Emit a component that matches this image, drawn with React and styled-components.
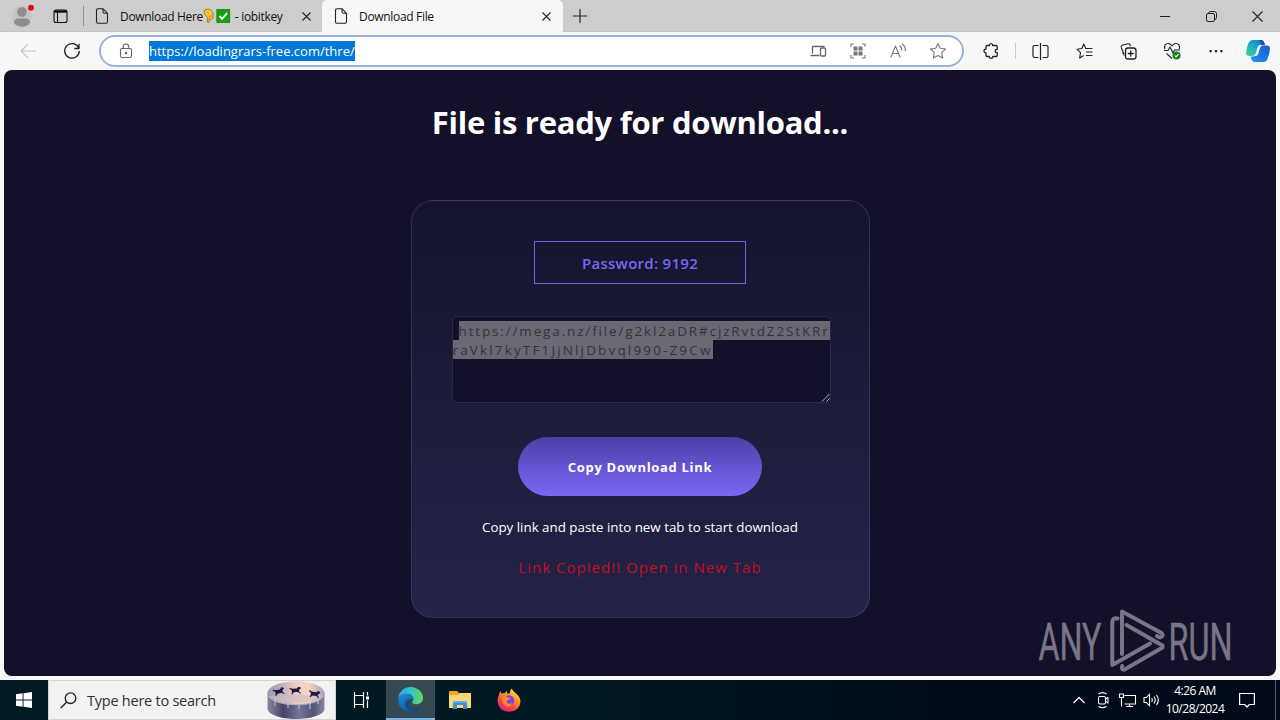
import React from "react";
import styled, { createGlobalStyle, css } from "styled-components";

const GlobalStyle = createGlobalStyle`
  * {
    box-sizing: border-box;
  }
  body {
    margin: 0;
    overflow: hidden;
    font-family: "Open Sans", "Noto Sans", sans-serif;
  }
  svg {
    display: block;
    flex: none;
    overflow: visible;
  }
`;

const Desktop = styled.div`
  width: 1280px;
  height: 720px;
  display: flex;
  flex-direction: column;
  background: #f7f7f7;
`;

/* ---------- tab strip ---------- */

const TabStrip = styled.div`
  flex: none;
  height: 32px;
  display: flex;
  background: #cdcdcd;
  border-bottom: 1px solid #c3c3c3;
`;

const StripButton = styled.div`
  width: ${props => props.$width}px;
  height: 32px;
  display: flex;
  align-items: center;
  justify-content: center;
`;

const StripDivider = styled.div`
  width: 1px;
  height: 20px;
  margin: 6px 0 0 7px;
  background: #8d8d8d;
`;

const Tab = styled.div`
  width: ${props => props.$width}px;
  height: 32px;
  display: flex;
  align-items: center;
  padding: 0 11px;
  font-size: 12px;
  letter-spacing: -0.32px;
  color: #111;
  white-space: pre;
  ${props =>
    props.$active &&
    css`
      padding: 0 12px;
      background: #f7f7f7;
      border-radius: 5px 5px 0 0;
    `};
`;

const TabTitle = styled.div`
  flex: 1;
  display: flex;
  align-items: center;
  margin-left: 11px;
`;

const WindowButtons = styled.div`
  display: flex;
  margin-left: auto;
`;

/* ---------- toolbar ---------- */

const Toolbar = styled.div`
  flex: none;
  height: 38px;
  display: flex;
  align-items: center;
  background: #f7f7f7;
`;

const ToolButton = styled.div`
  width: ${props => props.$width || 44}px;
  height: 38px;
  display: flex;
  align-items: center;
  justify-content: center;
  flex: none;
`;

const NavButtons = styled.div`
  flex: none;
  width: 99px;
  display: flex;
  padding-left: 6px;
`;

const AddressBar = styled.div`
  flex: none;
  width: 865px;
  height: 32px;
  display: flex;
  align-items: center;
  padding: 0 4px 0 17px;
  background: #fff;
  border: 2px solid #9ab3de;
  border-radius: 16px;
`;

const Address = styled.span`
  margin: 0 auto 0 15px;
  height: 20px;
  line-height: 20px;
  background: #0078d7;
  color: #fff;
  font-size: 13px;
`;

const AddressButton = styled.div`
  width: 40px;
  display: flex;
  justify-content: center;
`;

const ToolDivider = styled.div`
  width: 1px;
  height: 16px;
  margin: 0 2px;
  background: #c9c9c9;
`;

const Tools = styled.div`
  display: flex;
  align-items: center;
  margin-left: 5px;
`;

/* ---------- page ---------- */

const Page = styled.main`
  position: relative;
  flex: none;
  height: 606px;
  margin: 0 4px;
  border-radius: 8px;
  background: #131129;
  display: flex;
  flex-direction: column;
  align-items: center;
`;

const Title = styled.h1`
  margin: 30px 0 0;
  height: 44px;
  line-height: 44px;
  font-size: 31px;
  font-weight: 700;
  letter-spacing: -0.27px;
  color: #fff;
`;

const Card = styled.section`
  width: 459px;
  height: 418px;
  margin-top: 56px;
  padding: 40px 40px 0;
  display: flex;
  flex-direction: column;
  align-items: center;
  border: 1px solid rgba(124, 122, 170, 0.27);
  border-radius: 22px;
  background: linear-gradient(180deg, #15142c 0%, #1b1a37 40%, #232348 100%);
`;

const Password = styled.div`
  width: 212px;
  height: 43px;
  line-height: 43px;
  border: 1px solid #7261e6;
  text-align: center;
  font-size: 15px;
  font-weight: 600;
  letter-spacing: 0.29px;
  color: #7b68ee;
`;

const LinkBox = styled.div`
  align-self: flex-start;
  position: relative;
  width: 379px;
  height: 87px;
  margin-top: 32px;
  padding-top: 4px;
  border: 1px solid #29284b;
  border-radius: 5px;
  background: #131129;
`;

const LinkLine = styled.div`
  height: 19px;
  margin-left: ${props => props.$indent || 0}px;
  font-size: 13.5px;
  line-height: 21px;
  letter-spacing: ${props => props.$spacing}px;
  white-space: nowrap;

  span {
    display: inline-block;
    height: 19px;
    vertical-align: top;
    background: #6b6874;
    color: #35323f;
  }
`;

const ResizeGrip = styled.svg`
  position: absolute;
  right: 0;
  bottom: 0;
`;

const CopyButton = styled.button`
  width: 244px;
  height: 59px;
  margin-top: 34px;
  padding: 0;
  border: 0;
  border-radius: 30px;
  background: linear-gradient(180deg, #4c3fa8 0%, #7b67f5 100%);
  color: #fff;
  font: 700 13px "Open Sans", sans-serif;
  letter-spacing: 0.68px;
`;

const Hint = styled.p`
  margin: 21px 0 0;
  line-height: 20px;
  font-size: 13.333px;
  color: #fff;
`;

const Copied = styled.p`
  margin: 19px 0 0;
  line-height: 22px;
  font-size: 15px;
  letter-spacing: 1.02px;
  color: #c90b22;
`;

const Watermark = styled.svg`
  position: absolute;
  left: 1032px;
  top: 535px;
  opacity: 0.62;
`;

/* ---------- taskbar ---------- */

const Taskbar = styled.footer`
  flex: none;
  height: 40px;
  margin-top: 4px;
  display: flex;
  background: linear-gradient(90deg, #021a22 0%, #011820 45%, #020c1b 75%, #020a19 100%);
`;

const TaskButton = styled.div`
  width: ${props => props.$width || 49}px;
  height: 40px;
  display: flex;
  align-items: center;
  justify-content: center;
  ${props =>
    props.$active &&
    css`
      background: #364851;
      border-bottom: 2px solid #76b5e8;
    `};
`;

const Search = styled.div`
  width: 288px;
  height: 40px;
  display: flex;
  align-items: center;
  padding: 0 10px 0 11px;
  background: #f2f2f2;
  border: 1px solid #d4d4d4;
  color: #303030;

  span {
    flex: 1;
    margin-left: 10px;
    font-size: 14.5px;
    letter-spacing: -0.24px;
  }
`;

const Tray = styled.div`
  display: flex;
  align-items: center;
  margin-left: auto;
`;

const TrayIcon = styled.div`
  width: 24px;
  display: flex;
  justify-content: center;
`;

const Clock = styled.div`
  width: 64px;
  text-align: center;
  font-size: 12px;
  line-height: 18px;
  letter-spacing: -0.5px;
  color: #fff;
`;

const ShowDesktop = styled.div`
  width: 5px;
  height: 40px;
  margin-left: 8px;
  border-left: 1px solid #50606a;
`;

/* ---------- icons ---------- */

const Icon = ({ w = 16, h = w, color = "#222", sw = 1.1, children }) => (
  <svg
    width={w}
    height={h}
    viewBox={`0 0 ${w} ${h}`}
    fill="none"
    stroke={color}
    strokeWidth={sw}
    strokeLinejoin="round"
  >
    {children}
  </svg>
);

const DocIcon = () => (
  <Icon w={14} h={16}>
    <path d="M3 .7h5l4.5 4.6v8.5q0 1.5-1.5 1.5H3q-1.5 0-1.5-1.5V2.2Q1.5.7 3 .7ZM8 .7v3q0 1.5 1.5 1.5h3" />
  </Icon>
);

const CloseIcon = ({ size = 9 }) => (
  <Icon w={size}>
    <path d={`M.5.5 ${size - 0.5} ${size - 0.5}M${size - 0.5}.5.5 ${size - 0.5}`} />
  </Icon>
);

const ProfileIcon = () => (
  <svg width="24" height="24" viewBox="0 0 24 24">
    <circle cx="11.5" cy="12" r="10" fill="#c4c4c4" />
    <circle cx="12" cy="8" r="4.8" fill="#8e8e8e" />
    <path d="M4 19q0-4.6 4-4.6h8q4 0 4 4.6-3 3.8-8 3.8T4 19Z" fill="#8e8e8e" />
    <circle cx="21" cy="3.7" r="3" fill="#e00b1c" />
  </svg>
);

const EmojiPair = () => (
  <svg width="29" height="16" viewBox="0 0 29 16">
    <path
      d="M1 2.5 4 1l4 .8 2 3.2v5L7.5 12 6 11v3.2q-.8 1-1.6 0V9.5L1.500 6Z"
      fill="#ffc83d"
      stroke="#8a5a12"
      strokeWidth=".7"
    />
    <path d="m3.500 3.500 3 2.500M6.200 7.500v3M8 6.800v3" stroke="#b9771d" strokeWidth=".7" />
    <rect x="13.800" y="1.500" width="13" height="13" fill="#13a10e" stroke="#0b6a08" strokeWidth=".6" />
    <path d="m16.500 8 2.600 2.800 5-5.600" fill="none" stroke="#fff" strokeWidth="1.900" />
  </svg>
);

const StarIcon = ({ color = "#777" }) => (
  <Icon w={18} color={color}>
    <path d="m9 1.400 2.300 4.900 5.300.7-3.900 3.700 1 5.300L9 13.400 4.300 16l1-5.300L1.400 7l5.300-.7Z" />
  </Icon>
);

const CopilotIcon = () => (
  <svg width="24" height="24" viewBox="0 0 24 24">
    <defs>
      <linearGradient id="cop1" x1="0" y1="1" x2=".8" y2="0">
        <stop offset="0" stopColor="#4fd08a" />
        <stop offset=".45" stopColor="#22b6c0" />
        <stop offset="1" stopColor="#1679cf" />
      </linearGradient>
      <linearGradient id="cop2" x1="0" y1="1" x2="1" y2="0">
        <stop offset="0" stopColor="#2295ee" />
        <stop offset="1" stopColor="#1757cf" />
      </linearGradient>
    </defs>
    <path d="M6.500 1h8q3 0 3.800 2.800l.6 2h-3.500q-3 0-3.900 3L10 13.500Q9 17 6 17H3Q0 17 0 14q.5-5 2.500-10Q3.800 1 6.500 1Z" fill="url(#cop1)" />
    <path d="M18 6.500h2.800q3.200 0 3.200 3.300-.5 5-2.500 10-1.200 3.200-4.200 3.200H9q-2.600 0-3.500-2.600l-.8-2.800h2q3.500 0 4.500-3.300l1.400-4.800q1-3 3.900-3Z" fill="url(#cop2)" />
    <path d="M13 1.100h1.700q2.800 0 3.600 2.800l.6 2h-3.400Z" fill="#164fa3" />
    <path d="M12 7h3.200q-1 1-1.600 3.200l-1.200 4.100Q11.600 16.800 10 17H8.800q1.200-1 1.800-3l1.100-4Z" fill="#f4f8fb" />
  </svg>
);

const Cake = () => (
  <svg width="58" height="38" viewBox="0 0 58 38">
    <defs>
      <linearGradient id="side">
        <stop offset="0" stopColor="#8a84a4" />
        <stop offset=".28" stopColor="#464565" />
        <stop offset=".55" stopColor="#777597" />
        <stop offset=".8" stopColor="#4e5377" />
        <stop offset="1" stopColor="#858ba9" />
      </linearGradient>
      <linearGradient id="back">
        <stop offset="0" stopColor="#9998b1" />
        <stop offset=".5" stopColor="#edccc1" />
        <stop offset=".72" stopColor="#f9d5bf" />
        <stop offset="1" stopColor="#a7a2b9" />
      </linearGradient>
    </defs>
    <path d="M.5 12v16c1 6 14 10 28.500 10S57 34 57.500 28V12Z" fill="url(#side)" />
    <ellipse cx="29" cy="12" rx="28.500" ry="11.700" fill="url(#back)" />
    <path d="M2 16q8-3 15-1.500 12-2 24 0Q49 13 56 16q-6 5-27 6Q8 21 2 16Z" fill="#c9bcc8" opacity=".6" />
    <path d="M.5 14Q6 23.500 29 23.700T57.500 14" fill="none" stroke="#b5aec4" />
    <path d="M8 19v6M21 23v4M32 23v5M43 22v6M51 19v4" stroke="#c9c3d6" strokeWidth="1" />
    {[[5, 8, -12], [22, 6, -4], [42, 8, 10]].map(([x, y, angle]) => (
      <path
        key={x}
        transform={`translate(${x} ${y}) rotate(${angle})`}
        d="M0 1.500 1.200 1 3 2h4.500L9.500.3l2.300 1-.4 1.200-1.400.7-.3 1.800 1.800 2-.7.5-2.300-1.800H4.500L2.700 7.800 2 7.500 2.700 5 2.300 3.300Z"
        fill="#1d1747"
      />
    ))}
  </svg>
);

const EdgeIcon = () => (
  <svg width="25" height="25" viewBox="0 0 24 24">
    <defs>
      <linearGradient id="edgeTop" x1="0" y1=".5" x2="1" y2=".5">
        <stop offset="0" stopColor="#2fa8df" />
        <stop offset=".5" stopColor="#33c4c6" />
        <stop offset="1" stopColor="#63d957" />
      </linearGradient>
      <linearGradient id="edgeLow" x1="0" y1="0" x2=".6" y2="1">
        <stop offset="0" stopColor="#1a8bd8" />
        <stop offset="1" stopColor="#0c59a4" />
      </linearGradient>
    </defs>
    <path d="M.3 11C1 4 6 0 12 0c7 0 12 5 12 10.500 0 4-3 6-6.500 6-2.500 0-4-.8-4-1.800 0-.7 1.200-1.300 1.200-3.200 0-2.700-2.500-4.700-5.700-4.700C5 6.800 1.500 8.500.3 11Z" fill="url(#edgeTop)" />
    <path d="M.2 11.500C1.500 8.200 5 6.400 8.800 6.500c3.600.1 6 2.400 5.900 5-3-1.500-6 .5-6 4 0 4.500 4.800 7 9.300 5.700 1-.3 2.200-.8 3.200-1.400.5-.2.800.2.500.6C19.500 23 16 24 12 24 5 24-.5 18 .2 11.500Z" fill="url(#edgeLow)" />
    <path d="M8 12.500c-3 5 1 11 6 11.300 3.500-.2 6-1.500 7.700-3.400.3-.4 0-.8-.5-.6-5.500 3-12.500.5-12.500-4.300 0-1.500.7-3 1.600-3.700Z" fill="#114a8b" />
  </svg>
);

const FolderIcon = () => (
  <svg width="22" height="20" viewBox="0 0 22 20">
    <path d="M0 1h8l2 2h12v15H0Z" fill="#e9a92c" />
    <path d="M0 5h9l2-2h11v15H0Z" fill="#f7d774" />
    <path d="M4 19v-6q0-2 2-2h10q2 0 2 2v6h-4v-4H8v4Z" fill="#3b8fd0" />
    <path d="M4 13q0-2 2-2h10q2 0 2 2Z" fill="#5aaee6" />
  </svg>
);

const FirefoxIcon = () => (
  <svg width="24" height="24" viewBox="0 0 24 24">
    <defs>
      <linearGradient id="fox" x1=".8" y1="0" x2=".2" y2="1">
        <stop offset="0" stopColor="#fff04e" />
        <stop offset=".35" stopColor="#ff9a29" />
        <stop offset=".7" stopColor="#ff3d4d" />
        <stop offset="1" stopColor="#e31587" />
      </linearGradient>
    </defs>
    <path d="M3.500 3q.2 1.700 1 2.600 1.400-.5 3-.3Q8.700 3.500 10.500 3q-.8 1.300-.6 2.600h3.200Q12.500 3 14.500.5q1.500 2.700 4 4.500Q23.500 9 23.500 13.500 22.500 23.500 12 23.800 1 23 .5 13q0-3.500 1.500-6 .3-2.500 1.500-4Z" fill="url(#fox)" />
    <circle cx="12" cy="12.500" r="5.200" fill="#7543d6" />
    <path d="M5 10q3-3 6-.5 2 0 2.500 1-1 1.500-3 1.500-1.500 1.500 0 3 2 1.300 4.500 0-1 4-5.500 3.500Q5 17 5 10Z" fill="#ff8a22" />
  </svg>
);

const AnyRunLogo = () => (
  <Watermark width="198" height="66" viewBox="0 0 198 66">
    <g fill="#b7b3c0" stroke="#b7b3c0" strokeWidth=".4" fontFamily="Roboto, sans-serif" fontSize="51.500">
      <text x="2.500" y="54.500" textLength="63" lengthAdjust="spacingAndGlyphs">ANY</text>
      <text x="132.500" y="54.500" textLength="64" lengthAdjust="spacingAndGlyphs">RUN</text>
    </g>
    <g fill="none" stroke="#b7b3c0" strokeWidth="4" strokeLinejoin="round" strokeLinecap="round">
      <path d="M81.500 13.500q-5-1-5.200 3.500v43L114 38.500" />
      <path d="M86 49V6.500L125.500 28q3 3-1.500 4.500l-3-1.300" />
      <path d="m90.500 20 36 20.500v2L88.500 64.500q-3.500.5-2.300-3.500" />
    </g>
  </Watermark>
);

const App = () => (
  <>
    <GlobalStyle />
    <Desktop>
      <TabStrip>
        <StripButton $width={44}>
          <ProfileIcon />
        </StripButton>
        <StripButton $width={32}>
          <Icon w={15} h={14} color="#111">
            <rect x="1" y="1" width="13" height="12.500" rx="2" />
            <path d="M1 2.500h13" strokeWidth="2.400" />
            <path d="M4.500 3v10" />
          </Icon>
        </StripButton>
        <StripDivider />
        <Tab $width={238}>
          <DocIcon />
          <TabTitle>
            Download Here
            <EmojiPair />
            {" - iobitkey"}
          </TabTitle>
          <CloseIcon />
        </Tab>
        <Tab $width={241} $active>
          <DocIcon />
          <TabTitle>Download File</TabTitle>
          <CloseIcon />
        </Tab>
        <StripButton $width={33}>
          <Icon w={14} sw={1.2}>
            <path d="M7 0v14M0 7h14" />
          </Icon>
        </StripButton>
        <WindowButtons>
          <StripButton $width={46}>
            <Icon w={10} sw={1}>
              <path d="M0 5.500h10" />
            </Icon>
          </StripButton>
          <StripButton $width={46}>
            <Icon w={11} sw={1}>
              <rect x=".5" y="2.500" width="8" height="8" rx="1.500" />
              <path d="M2.500 2.500Q2.700.5 4.500.5h3.800q2.200 0 2.200 2.200v3.800q0 1.800-2 2" />
            </Icon>
          </StripButton>
          <StripButton $width={46}>
            <CloseIcon size={11} />
          </StripButton>
        </WindowButtons>
      </TabStrip>

      <Toolbar>
        <NavButtons>
          <ToolButton>
            <Icon color="#c4c4c4">
              <path d="M16 8H1M8 1 1 8l7 7" />
            </Icon>
          </ToolButton>
          <ToolButton>
            <Icon sw={1.3}>
              <path d="M14.800 5.200A7.300 7.300 0 1 0 15.300 8M15 .8v4.700h-4.700" />
            </Icon>
          </ToolButton>
        </NavButtons>
        <AddressBar>
          <Icon color="#666">
            <rect x="2.500" y="5.500" width="11" height="9" rx="1.500" />
            <path d="M5.200 5.500V3.800q0-2.800 2.800-2.800t2.800 2.800v1.700" />
            <circle cx="8" cy="10" r=".7" fill="#666" />
          </Icon>
          <Address>https://loadingrars-free.com/thre/</Address>
          <AddressButton>
            <Icon color="#666" sw={1.3}>
              <path d="M2.500 10.500V3.500h12M.5 12.500h9" />
              <rect x="10.500" y="5" width="5" height="8" rx="1" />
            </Icon>
          </AddressButton>
          <AddressButton>
            <Icon color="#777">
              <path d="M1 4V1h3M12 1h3v3M15 12v3h-3M4 15H1v-3" />
              <path d="M3.500 3.500h4v4h-4zM8.500 3.500h4v4h-4zM3.500 8.500h4v4h-4zM8.500 8.500h4v4h-4z" fill="#777" stroke="none" />
            </Icon>
          </AddressButton>
          <AddressButton>
            <Icon color="#777">
              <path d="M.8 14.500 5.500 3l4.700 11.500M2.500 10.500h6M9.500 2.500q2.500 1.800 2.200 5M12 .8q3.800 2.500 3.300 7.200" />
            </Icon>
          </AddressButton>
          <AddressButton>
            <StarIcon />
          </AddressButton>
        </AddressBar>
        <Tools>
          <ToolButton>
            <Icon sw={1.3}>
              <path d="M4 2.500h2.300Q6.300.6 8 .6t1.700 1.900h3.500q1 0 1 1v3q-2-.4-2 1.500t2 1.500v3q0 1-1 1H9.800q0 1.900-1.700 1.900t-1.800-1.900H4q-1 0-1-1V9.800Q1 9.800 1 8t2-1.800V3.500q0-1 1-1Z" />
            </Icon>
          </ToolButton>
          <ToolDivider />
          <ToolButton>
            <Icon w={17} sw={1.2}>
              <path d="M6.500 2.500h-4Q1 2.500 1 4v9q0 1.500 1.500 1.500h4M10.500 2.500h4Q16 2.500 16 4v9q0 1.500-1.500 1.500h-4M8.500 0v17" />
            </Icon>
          </ToolButton>
          <ToolButton>
            <Icon w={17}>
              <path d="M9.800 5.500 7.800 1 5.800 5.500 1 6.200 4.500 9.700l-.8 5.300 4-2.500M9 5.500h7.500M10 9h6.500M10 12.500h6.500" />
            </Icon>
          </ToolButton>
          <ToolButton>
            <Icon w={17}>
              <path d="m4 11-2.800-6.500q-.5-1.500 1-2.200L8 .8q1.500-.3 2 1l.4 1.500M4.500 12.500q-2-1-1.500-3" />
              <rect x="5.500" y="5" width="10.500" height="11" rx="2.500" strokeWidth="1.300" />
              <path d="M10.700 7.500v6M7.700 10.500h6" strokeWidth="1.300" />
            </Icon>
          </ToolButton>
          <ToolButton>
            <Icon w={18}>
              <path d="M2 7C.5 3.500 3 1.500 5 1.500q2 0 4 2.300 2-2.300 4-2.300c2.500 0 4.500 2.500 3.200 5.500M1 8.500h4L7 5l3 6 1.500-3H17M3.500 11.500 9 16.500" />
              <circle cx="13.500" cy="13.500" r="4" fill="#16821a" stroke="none" />
              <path d="m11.700 13.500 1.300 1.400 2.400-2.800" stroke="#fff" />
            </Icon>
          </ToolButton>
          <ToolButton>
            <Icon w={14} h={4}>
              <path d="M.5 1h2.200v2.200H.5zM5.900 1h2.200v2.200H5.900zM11.300 1h2.200v2.200h-2.200z" fill="#222" stroke="none" />
            </Icon>
          </ToolButton>
          <ToolButton $width={40}>
            <CopilotIcon />
          </ToolButton>
        </Tools>
      </Toolbar>

      <Page>
        <Title>File is ready for download...</Title>
        <Card>
          <Password>Password: 9192</Password>
          <LinkBox>
            <LinkLine $indent={6} $spacing={1.85}>
              <span>https://mega.nz/file/g2kl2aDR#cjzRvtdZ2StKRr</span>
            </LinkLine>
            <LinkLine $spacing={2.15}>
              <span>raVkl7kyTF1JjNljDbvql990-Z9Cw</span>
            </LinkLine>
            <ResizeGrip width="8" height="8" viewBox="0 0 8 8">
              <path d="M0 7.500 7.500 0M4.500 7.500l3-3" stroke="#b5b3c2" />
            </ResizeGrip>
          </LinkBox>
          <CopyButton>Copy Download Link</CopyButton>
          <Hint>Copy link and paste into new tab to start download</Hint>
          <Copied>Link Copied!! Open in New Tab</Copied>
        </Card>
        <AnyRunLogo />
      </Page>

      <Taskbar>
        <TaskButton $width={48}>
          <svg width="16" height="16" viewBox="0 0 16 16" fill="#fff">
            <path d="m0 2.200 6.600-.9v6.200H0ZM7.500 1.200 16 0v7.500H7.500ZM0 8.400h6.600v6.300L0 13.800ZM7.500 8.400H16V16l-8.500-1.200Z" />
          </svg>
        </TaskButton>
        <Search>
          <Icon w={17} sw={1.3}>
            <circle cx="10.500" cy="6.200" r="5.300" />
            <path d="M6.700 10 .7 16" />
          </Icon>
          <span>Type here to search</span>
          <Cake />
        </Search>
        <TaskButton $width={50}>
          <Icon w={17} h={16} color="#fff" sw={1.2}>
            <path d="M1.500 0v3.500h9V0M1.500 16v-3.500h9V16M1.500 3.500v9M10.500 3.500v9M14.500 0v3.500M14.500 8.500V16" />
            <path d="M13 4.500h3v3h-3z" fill="#fff" stroke="none" />
          </Icon>
        </TaskButton>
        <TaskButton $active>
          <EdgeIcon />
        </TaskButton>
        <TaskButton>
          <FolderIcon />
        </TaskButton>
        <TaskButton>
          <FirefoxIcon />
        </TaskButton>
        <Tray>
          <TrayIcon>
            <Icon w={12} h={8} color="#fff" sw={1.2}>
              <path d="m.5 7 5.500-5.500L11.500 7" />
            </Icon>
          </TrayIcon>
          <TrayIcon>
            <Icon w={14} h={16} color="#fff">
              <rect x="2.500" y="4.500" width="7" height="7.500" rx="1.500" />
              <path d="m9.500 7 2.500-1.500v5.500L9.500 9.500M2.500 2Q6.500-.8 10.500 2M2.500 14.500q4 2.500 8 0" />
            </Icon>
          </TrayIcon>
          <TrayIcon>
            <Icon w={17} h={15} color="#fff">
              <path d="M5.500 2.500h11v8.500h-11M10.500 11v2.500M7 13.500h7M.5 1h4v3.500h-4zM2.500 4.500v9" />
            </Icon>
          </TrayIcon>
          <TrayIcon>
            <Icon w={17} h={14} color="#fff">
              <path d="M1 4.500h2.500L6.500 1v12l-3-3.500H1ZM8.700 5q1.300 2 0 4M11 3.500q2.500 3.500 0 7M13.500 2q3.700 5 0 10" />
            </Icon>
          </TrayIcon>
          <Clock>
            4:26 AM
            <br />
            10/28/2024
          </Clock>
          <TaskButton $width={40}>
            <Icon w={16} color="#fff" sw={1.2}>
              <path d="M.6 1.500h14.800v11h-5L8 15l-2.400-2.500h-5Z" />
            </Icon>
          </TaskButton>
          <ShowDesktop />
        </Tray>
      </Taskbar>
    </Desktop>
  </>
);

export default App;
